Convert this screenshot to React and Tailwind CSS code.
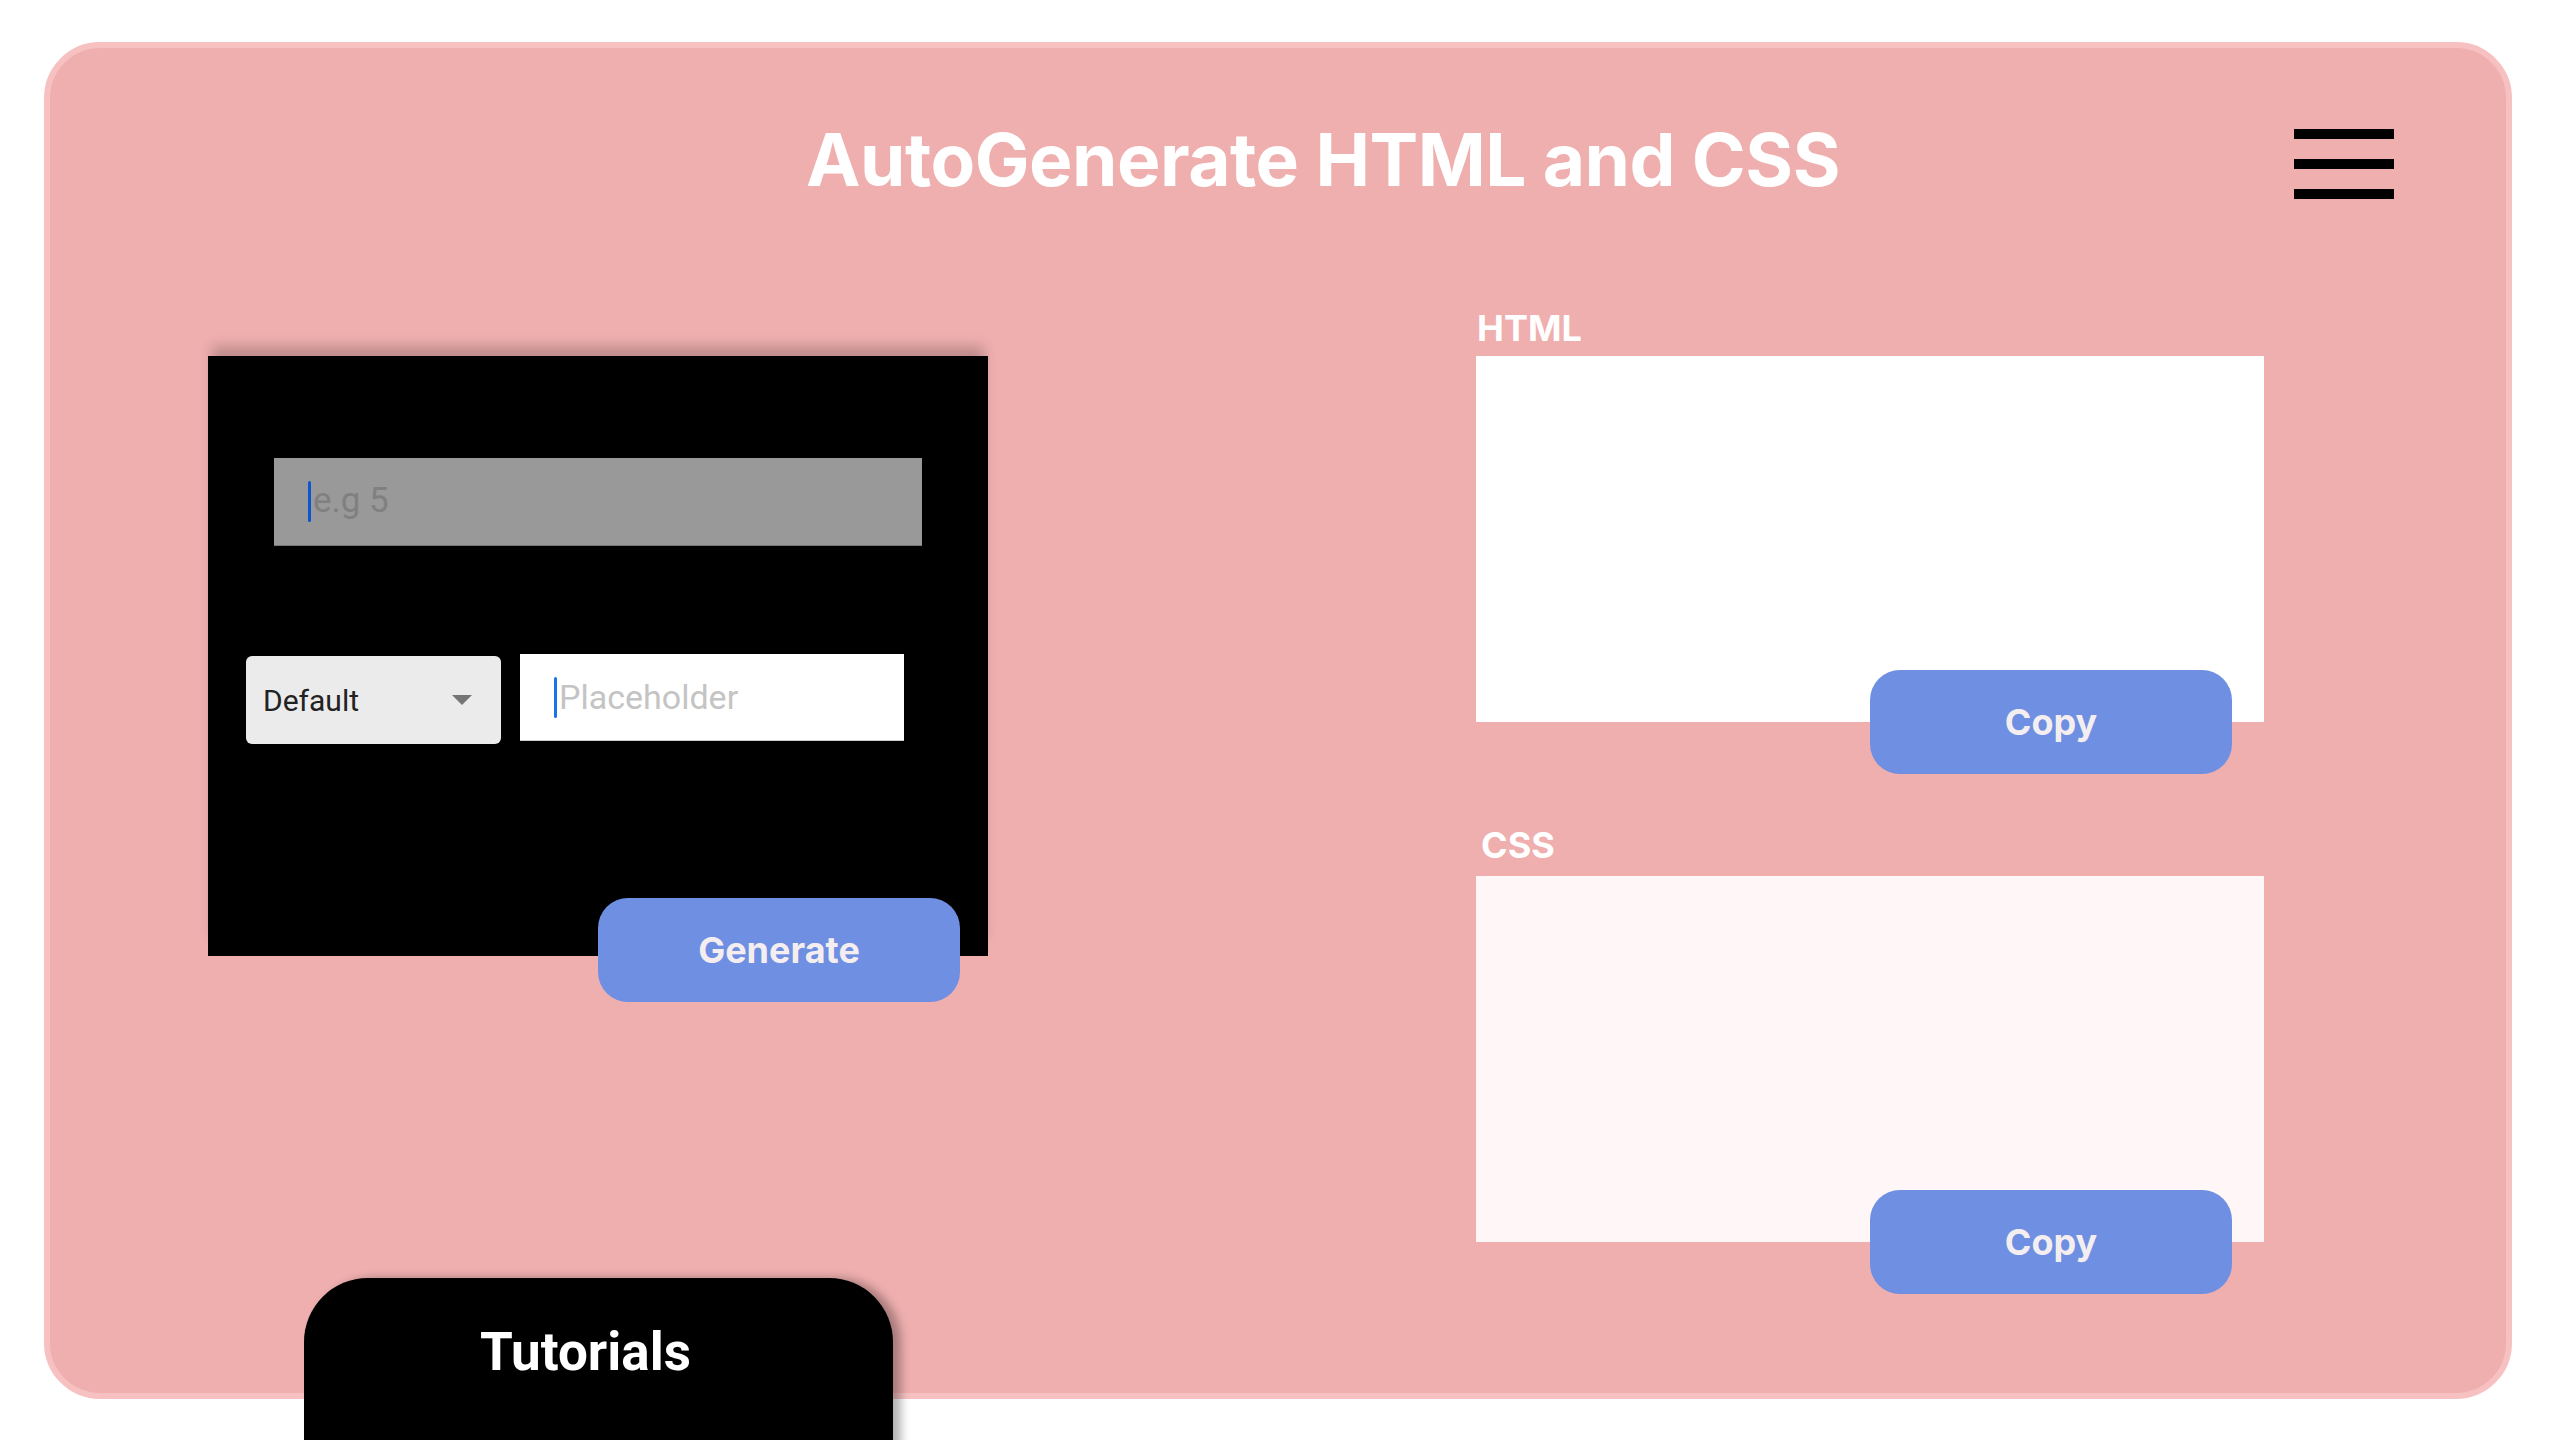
import React from "react";

function Caret({ color }) {
  return <span className={`mr-[2px] inline-block h-[41px] w-[3px] rounded-full ${color}`} />;
}

function CopyButton() {
  return (
    <button
      type="button"
      className="relative ml-[394px] mt-[-52px] flex h-[104px] w-[362px] items-center justify-center rounded-[30px] bg-[#6f8fe2] text-[36px] font-bold text-[#f5eef0]"
    >
      Copy
    </button>
  );
}

export default function App() {
  return (
    <div className="h-[1440px] w-full overflow-hidden bg-white pl-[44px] pt-[42px] font-['Inter',sans-serif]">
      <div className="h-[1357px] w-[2468px] rounded-[56px] border-[6px] border-[#f7c1c1] bg-[#efafaf]">
        {/* header */}
        <div className="flex items-start pl-[302px] pr-[112px] pt-[75px]">
          <h1 className="flex-1 text-center text-[73px] font-bold leading-none tracking-[-0.5px] text-white">
            AutoGenerate HTML and CSS
          </h1>
          <div className="mt-[6px] flex w-[100px] flex-col gap-[20px]">
            <span className="h-[10px] w-full bg-black" />
            <span className="h-[10px] w-full bg-black" />
            <span className="h-[10px] w-full bg-black" />
          </div>
        </div>

        <div className="mt-[111px] flex pl-[158px]">
          {/* left column */}
          <div className="w-[780px] pt-[46px]">
            <div className="h-[600px] w-[780px] bg-black shadow-[0_-14px_12px_-4px_rgba(0,0,0,0.2)]">
              <div className="pt-[102px]">
                <div className="mx-[66px] flex h-[88px] items-center border-b border-[#777] bg-[#999] pl-[34px] font-['Roboto',sans-serif] text-[35px] text-[#808080]">
                  <Caret color="bg-[#0b57d0]" />
                  e.g 5
                </div>
              </div>
              <div className="mt-[108px] flex items-start gap-[19px] pl-[38px] font-['Roboto',sans-serif]">
                <div className="mt-[2px] flex h-[88px] w-[255px] items-center justify-between rounded-[6px] bg-[#ebebeb] pl-[17px] pr-[29px] text-[30px] text-[#222]">
                  <span>Default</span>
                  <svg width="20" height="10" viewBox="0 0 20 10">
                    <polygon points="0,0 20,0 10,10" fill="#757575" />
                  </svg>
                </div>
                <div className="flex h-[87px] w-[384px] items-center border-b border-[#ccc] bg-white pl-[34px] text-[34px] text-[#c4c4c4]">
                  <Caret color="bg-[#1a73e8]" />
                  Placeholder
                </div>
              </div>
              <button
                type="button"
                className="relative ml-[390px] mt-[154px] flex h-[104px] w-[362px] items-center justify-center rounded-[30px] bg-[#6f8fe2] text-[36px] font-bold text-[#f5eef0]"
              >
                Generate
              </button>
            </div>

            <div className="ml-[96px] mt-[322px] h-[200px] w-[589px] rounded-t-[64px] bg-black pr-[26px] pt-[48px] text-center font-['Roboto',sans-serif] text-[53px] font-bold leading-none text-white shadow-[8px_0_10px_rgba(0,0,0,0.3)]">
              Tutorials
            </div>
          </div>

          {/* right column */}
          <div className="ml-[488px] w-[788px]">
            <div className="pl-[1px] text-[36px] font-bold leading-none text-white">HTML</div>
            <div className="mt-[10px] h-[366px] bg-white" />
            <CopyButton />
            <div className="mt-[53px] pl-[5px] text-[36px] font-bold leading-none text-white">CSS</div>
            <div className="mt-[13px] h-[366px] bg-[#fff7f7]" />
            <CopyButton />
          </div>
        </div>
      </div>
    </div>
  );
}
